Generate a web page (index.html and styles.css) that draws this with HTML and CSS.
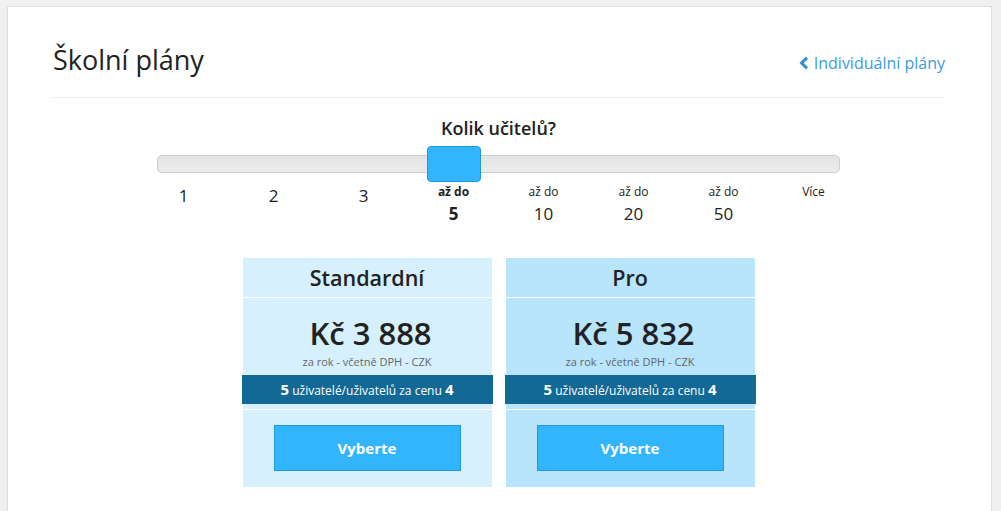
FILE: index.html
```html
<!DOCTYPE html>
<html lang="cs">
<head>
    <title>Školní plány</title>
    <link rel="stylesheet" href="styles.css">
</head>
<body>
    <div id="page">
        <div class="header">
            <h1>Školní plány</h1>
            <a class="back-link" href="#">
                <svg width="10" height="14" viewBox="0 0 10 14"><path d="M8 1.6 L2.6 7 L8 12.4" fill="none" stroke="#2e8fd8" stroke-width="3"/></svg>
                Individuální plány
            </a>
        </div>

        <div class="question">Kolik učitelů?</div>

        <div class="slider">
            <div class="track"></div>
            <div class="handle"></div>
        </div>

        <div class="ticks">
            <div class="tick"><span class="num">1</span></div>
            <div class="tick"><span class="num">2</span></div>
            <div class="tick"><span class="num">3</span></div>
            <div class="tick active"><span class="small">až do</span><span class="num">5</span></div>
            <div class="tick"><span class="small">až do</span><span class="num">10</span></div>
            <div class="tick"><span class="small">až do</span><span class="num">20</span></div>
            <div class="tick"><span class="small">až do</span><span class="num">50</span></div>
            <div class="tick"><span class="small">Více</span></div>
        </div>

        <div class="plans">
            <div class="plan standard">
                <div class="plan-name">Standardní</div>
                <div class="plan-price">
                    <div class="price">Kč 3 888</div>
                    <div class="price-note">za rok - včetně DPH - CZK</div>
                </div>
                <div class="deal"><b>5</b> uživatelé/uživatelů za cenu <b>4</b></div>
                <div class="plan-action">
                    <button class="select-btn">Vyberte</button>
                </div>
            </div>
            <div class="plan pro">
                <div class="plan-name">Pro</div>
                <div class="plan-price">
                    <div class="price">Kč 5 832</div>
                    <div class="price-note">za rok - včetně DPH - CZK</div>
                </div>
                <div class="deal"><b>5</b> uživatelé/uživatelů za cenu <b>4</b></div>
                <div class="plan-action">
                    <button class="select-btn">Vyberte</button>
                </div>
            </div>
        </div>
    </div>
</body>
</html>
```

FILE: styles.css
```css
body {
    margin: 0;
    padding: 6px 9px 0 7px;
    background-color: #f0f0f0;
    font-family: "Open Sans", "DejaVu Sans", sans-serif;
    color: #222;
    overflow: hidden;
}
#page {
    background-color: #fff;
    border: 1px solid #ddd;
    border-bottom: none;
    padding: 0 46px 30px 44px;
    height: 520px;
}
.header {
    display: flex;
    justify-content: space-between;
    align-items: baseline;
    padding: 35px 0 19px 1px;
    border-bottom: 1px solid #eee;
}
h1 {
    margin: 0;
    font-size: 27px;
    line-height: 36px;
    font-weight: 500;
    color: #222;
}
.back-link {
    display: flex;
    align-items: center;
    gap: 5px;
    font-size: 16px;
    color: #3d9be0;
    text-decoration: none;
}
.question {
    margin-top: 18px;
    text-align: center;
    font-size: 18px;
    line-height: 24px;
    font-weight: 600;
}
.slider {
    position: relative;
    width: 683px;
    height: 36px;
    margin: 6px auto 0;
    display: flex;
    align-items: center;
}
.track {
    width: 100%;
    height: 16px;
    border: 1px solid #cdcdcd;
    border-radius: 5px;
    background: linear-gradient(#e3e3e3, #ececec);
}
.handle {
    position: absolute;
    left: 270px;
    top: 0;
    width: 52px;
    height: 34px;
    background-color: #33b5fd;
    border: 1px solid #1e9ae0;
    border-radius: 4px;
}
.ticks {
    display: grid;
    grid-template-columns: repeat(8, 90px);
    width: 720px;
    margin: 2px auto 0;
    text-align: center;
}
.tick {
    display: flex;
    flex-direction: column;
    align-items: center;
}
.small {
    font-size: 12px;
    line-height: 16px;
}
.num {
    font-size: 17px;
    line-height: 24px;
}
.small + .num {
    line-height: 27px;
}
.active .small, .active .num {
    font-weight: 700;
}
.plans {
    display: flex;
    justify-content: center;
    gap: 14px;
    margin-top: 31px;
}
.plan {
    width: 249px;
    text-align: center;
}
.standard {
    background-color: #d6f0fd;
}
.pro {
    background-color: #b8e4fc;
}
.plan-name {
    height: 39px;
    line-height: 40px;
    font-size: 21.5px;
    font-weight: 600;
    border-bottom: 1px solid #fff;
}
.plan-price {
    padding: 15px 0 5px;
}
.price {
    padding-left: 7px;
    font-size: 31px;
    line-height: 41px;
    font-weight: 600;
}
.price-note {
    font-size: 11px;
    line-height: 16px;
    color: #666;
}
.deal {
    margin: 0 -1px;
    height: 29px;
    line-height: 29px;
    background-color: #136995;
    color: #fff;
    font-size: 12px;
}
.deal b {
    font-size: 15px;
}
.plan-action {
    margin-top: 5px;
    border-top: 1px solid #fff;
    padding: 15px 0 16px;
}
.select-btn {
    width: 187px;
    height: 46px;
    background-color: #33b5fd;
    border: 1px solid #1e9ae0;
    color: #fff;
    font-family: inherit;
    font-size: 15px;
    font-weight: 700;
    cursor: pointer;
}
```
